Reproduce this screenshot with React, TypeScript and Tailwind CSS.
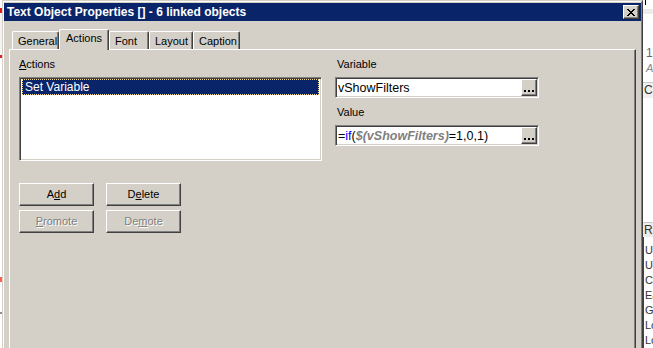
import React from "react";

const raised =
  "border border-t-white border-l-white border-r-[#404040] border-b-[#404040] shadow-[inset_-1px_-1px_0_#808080]";
const sunken =
  "border border-t-[#808080] border-l-[#808080] border-r-white border-b-white shadow-[inset_1px_1px_0_#404040,inset_-1px_-1px_0_#d4d0c8]";

function Tab({ label, w, active }: { label: string; w: string; active?: boolean }) {
  if (active) {
    return (
      <div
        className={`${w} h-[21px] -mb-px relative z-10 bg-[#d4d0c8] border-t border-l border-t-white border-l-white border-r border-r-[#404040] shadow-[inset_-1px_0_0_#808080] rounded-t-[2px] pl-[6px] pt-[2px] text-[11px] leading-[13px] text-black`}
      >
        {label}
      </div>
    );
  }
  return (
    <div
      className={`${w} h-[18px] bg-[#d4d0c8] border-t border-l border-t-white border-l-white border-r border-r-[#404040] shadow-[inset_-1px_0_0_#808080] rounded-t-[2px] pl-[5px] pt-[3px] text-[11px] leading-[13px] text-black`}
    >
      {label}
    </div>
  );
}

function Btn({ children, disabled }: { children: React.ReactNode; disabled?: boolean }) {
  return (
    <div
      className={`${raised} w-[75px] h-[23px] bg-[#d4d0c8] flex items-center justify-center text-[11px] leading-[13px] ${
        disabled ? "text-[#808080] [text-shadow:1px_1px_0_#ffffff]" : "text-black"
      }`}
    >
      {children}
    </div>
  );
}

function DotsButton() {
  return (
    <div className={`${raised} w-[16px] h-[17px] bg-[#d4d0c8] flex items-end justify-center gap-[2px] pb-[3px] shrink-0`}>
      <div className="w-[2px] h-[2px] bg-black" />
      <div className="w-[2px] h-[2px] bg-black" />
      <div className="w-[2px] h-[2px] bg-black" />
    </div>
  );
}

function Field({ children }: { children: React.ReactNode }) {
  return (
    <div className={`${sunken} bg-white h-[21px] flex items-center pl-[2px] pr-[1px]`}>
      <div className="flex-1 text-[12.5px] leading-[14px] text-black whitespace-nowrap overflow-hidden">{children}</div>
      <DotsButton />
    </div>
  );
}

function LeftStrip() {
  return (
    <div className="w-[2px] shrink-0 flex flex-col bg-white">
      <div className="h-[8px]" />
      <div className="h-[5px] bg-[#e02020]" />
      <div className="h-[42px] bg-[#f4f4f4]" />
      <div className="h-[3px] bg-[#e02020]" />
      <div className="h-[219px] bg-white" />
      <div className="h-[5px] bg-[#ff6050]" />
      <div className="h-[30px]" />
      <div className="h-[2px] bg-[#909090]" />
    </div>
  );
}

function RightStrip() {
  return (
    <div className="w-[10px] shrink-0 flex flex-col bg-white overflow-hidden text-[#333] text-[12px] leading-[15px] whitespace-nowrap">
      <div className="ml-[2px] w-px h-[5px] bg-black" />
      <div className="h-[5px] mt-[4px] bg-[#ececec]" />
      <div className="h-[34px]" />
      <div className="pl-[3px] h-[15px] text-[#666]">1</div>
      <div className="pl-[3px] h-[15px] italic text-[#888] text-[11px]">A</div>
      <div className="h-[6px]" />
      <div className="h-[17px] border-t border-[#c8c8c8] bg-[#f0f0f0] pl-[1px] flex items-center">Cr</div>
      <div className="h-[129px]" />
      <div className="h-[15px] border-t border-[#c8c8c8] bg-[#ececec] pl-[1px] flex items-center">Re</div>
      <div className="flex-1 border-l border-[#404040] pl-px pt-[6px] text-[11px]">
        <div className="h-[15px]">Ur</div>
        <div className="h-[15px]">Ur</div>
        <div className="h-[15px]">Ce</div>
        <div className="h-[15px]">Ea</div>
        <div className="h-[15px]">Gr</div>
        <div className="h-[15px]">Lo</div>
        <div className="h-[15px]">Lo</div>
      </div>
    </div>
  );
}

export default function App() {
  return (
    <div className="flex w-[653px] h-[348px] overflow-hidden bg-white font-['Liberation_Sans',Arial,sans-serif]">
      <LeftStrip />
      <div className="w-[641px] h-[360px] shrink-0 flex flex-col bg-[#d4d0c8] border-t border-l border-t-[#d4d0c8] border-l-[#d4d0c8] border-r border-r-[#404040]">
        <div className="flex-1 flex flex-col border-t border-l border-t-white border-l-white border-r border-r-[#808080] pt-px">
          {/* Title bar */}
          <div className="h-[18px] bg-[#0a246a] flex items-center pl-[3px] pr-[2px]">
            <div className="flex-1 text-white font-bold text-[12px] leading-[14px] whitespace-nowrap">
              Text Object Properties [] - 6 linked objects
            </div>
            <div className={`${raised} w-[16px] h-[14px] bg-[#d4d0c8] flex items-center justify-center`}>
              <svg width="8" height="7" viewBox="0 0 8 7">
                <path d="M0 0h2v1h-2zM6 0h2v1h-2zM1 1h2v1h-2zM5 1h2v1h-2zM2 2h4v1h-4zM3 3h2v1h-2zM2 4h4v1h-4zM1 5h2v1h-2zM5 5h2v1h-2zM0 6h2v1h-2zM6 6h2v1h-2z" fill="#000" />
              </svg>
            </div>
          </div>

          {/* Body */}
          <div className="flex-1 flex flex-col px-[5px] pt-[8px]">
            <div className="flex items-end h-[20px] ml-[3px] relative z-10">
              <Tab label="General" w="w-[47px]" />
              <Tab label="Actions" w="w-[50px]" active />
              <Tab label="Font" w="w-[40px]" />
              <Tab label="Layout" w="w-[44px]" />
              <Tab label="Caption" w="w-[47px]" />
            </div>
            <div className="flex-1 flex border-t border-l border-t-white border-l-white border-r border-r-[#404040] shadow-[inset_-1px_0_0_#808080] pt-[8px] pl-[9px]">
              {/* Left column */}
              <div className="w-[303px] flex flex-col">
                <div className="h-[13px] text-[11px] leading-[13px] text-black">
                  <span className="underline">A</span>ctions
                </div>
                <div className={`${sunken} mt-[6px] h-[84px] bg-white p-[2px] pt-[1px]`}>
                  <div className="h-[16px] bg-[#0a246a] border border-dotted border-[#f5db95] text-white text-[12px] leading-[14px] pl-[2px]">
                    Set Variable
                  </div>
                </div>
                <div className="mt-[22px] flex flex-col gap-[4px]">
                  <div className="flex gap-[12px]">
                    <Btn>
                      A<span className="underline">d</span>d
                    </Btn>
                    <Btn>
                      D<span className="underline">e</span>lete
                    </Btn>
                  </div>
                  <div className="flex gap-[12px]">
                    <Btn disabled>
                      <span className="underline">P</span>romote
                    </Btn>
                    <Btn disabled>
                      De<span className="underline">m</span>ote
                    </Btn>
                  </div>
                </div>
              </div>

              {/* Right column */}
              <div className="ml-[13px] w-[204px] flex flex-col">
                <div className="h-[13px] text-[11px] leading-[13px] text-black pl-[2px]">Variable</div>
                <div className="mt-[6px]">
                  <Field>vShowFilters</Field>
                </div>
                <div className="mt-[8px] h-[13px] text-[11px] leading-[13px] text-black pl-[2px]">Value</div>
                <div className="mt-[6px]">
                  <Field>
                    =<span className="text-[#0000ff]">if</span>(
                    <span className="text-[#808080] font-bold italic">$(vShowFilters)</span>=1,0,1)
                  </Field>
                </div>
              </div>
            </div>
          </div>
        </div>
      </div>
      <RightStrip />
    </div>
  );
}
